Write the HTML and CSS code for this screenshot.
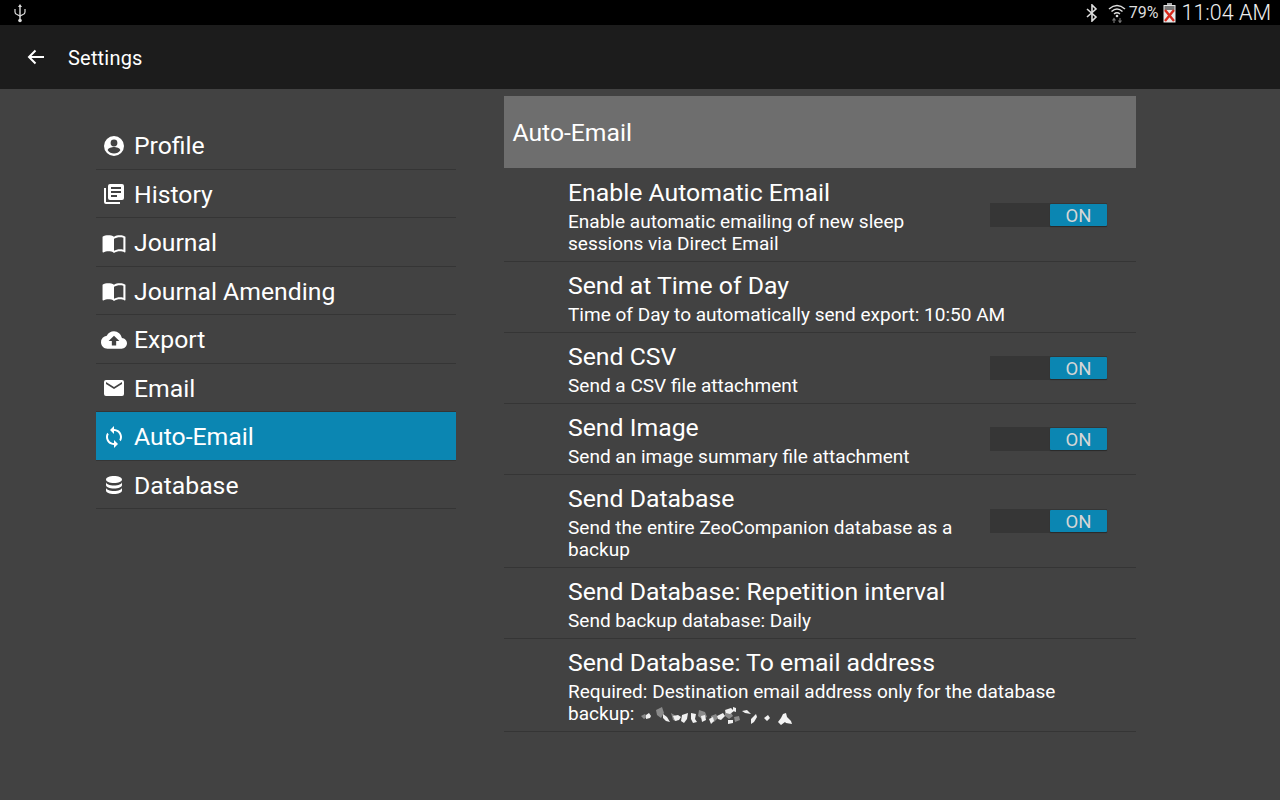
FILE: index.html
```html
<!DOCTYPE html>
<html lang="en">
<head>
    <meta charset="UTF-8">
    <title>Settings</title>
    <link rel="stylesheet" href="styles.css">
</head>
<body>
    <div class="status-bar">
        <svg class="usb-icon" width="14" height="20" viewBox="0 0 14 20">
            <path d="M7 1 L9 4 H7.7 V16 H6.3 V4 H5 Z" fill="#ddd"/>
            <circle cx="7" cy="17.5" r="1.8" fill="#ddd"/>
            <path d="M2 6 V9 Q2 11 4 11.5 L7 13 L10 11.5 Q12 11 12 9 V6" fill="none" stroke="#ddd" stroke-width="1.2"/>
        </svg>
        <div class="status-right">
            <svg width="12" height="18" viewBox="0 0 12 18">
                <path d="M1 5 L10 13 L6 17 V1 L10 5 L1 13" fill="none" stroke="#ddd" stroke-width="1.6"/>
            </svg>
            <svg class="wifi-icon" width="18" height="20" viewBox="0 0 18 20">
                <path d="M1 6 Q9 -1 17 6 M3.5 8.5 Q9 3.5 14.5 8.5 M6 11 Q9 8.5 12 11" fill="none" stroke="#ddd" stroke-width="1.5"/>
                <circle cx="9" cy="13" r="1.3" fill="#ddd"/>
                <path d="M6 20 V16 M4.5 17.5 L6 15.5 L7.5 17.5 M12 15 V19 M10.5 17.5 L12 19.5 L13.5 17.5" fill="none" stroke="#777" stroke-width="1.1"/>
            </svg>
            <span class="battery-text">79%</span>
            <svg class="battery-icon" width="13" height="20" viewBox="0 0 13 20">
                <rect x="4" y="0" width="5" height="2" fill="#aaa"/>
                <rect x="0.5" y="2" width="12" height="17.5" fill="#e8e8e8"/>
                <rect x="1.5" y="3" width="10" height="4" fill="#777"/>
                <path d="M2 7 L11 18 M11 7 L2 18" stroke="#d8291c" stroke-width="2.4"/>
            </svg>
            <span class="clock">11:04 AM</span>
        </div>
    </div>

    <header class="app-bar">
        <svg class="back-icon" width="18" height="16" viewBox="0 0 18 16">
            <path d="M17 8 H2 M8.5 1.5 L2 8 L8.5 14.5" fill="none" stroke="#fff" stroke-width="2"/>
        </svg>
        <span class="app-title">Settings</span>
    </header>

    <main class="content">
        <nav class="side-nav">
            <a class="nav-item">
                <svg class="nav-icon" viewBox="0 0 24 24"><path d="M12 2a10 10 0 1 0 0 20 10 10 0 0 0 0-20zm0 3.600a3.400 3.400 0 1 1 0 6.800 3.400 3.400 0 0 1 0-6.800zM12 19.600a7.700 7.700 0 0 1-6.300-3.300c.1-2.100 4.200-3.200 6.300-3.200s6.200 1.100 6.300 3.200a7.700 7.700 0 0 1-6.300 3.300z"/></svg>
                Profile
            </a>
            <a class="nav-item">
                <svg class="nav-icon" viewBox="0 0 24 24"><path d="M4 6H2v14a2 2 0 0 0 2 2h14v-2H4V6zm16-4H8a2 2 0 0 0-2 2v12a2 2 0 0 0 2 2h12a2 2 0 0 0 2-2V4a2 2 0 0 0-2-2zm-1 9H9V9h10v2zm-4 4H9v-2h6v2zm4-8H9V5h10v2z"/></svg>
                History
            </a>
            <a class="nav-item">
                <svg class="nav-icon book" viewBox="0 0 24 24"><path d="M21 5c-1.100-.35-2.300-.5-3.500-.5-1.950 0-4.050.4-5.500 1.500-1.450-1.100-3.550-1.500-5.500-1.500S2.450 4.900 1 6v14.650c0 .25.25.5.5.5.1 0 .15-.05.25-.05C3.100 20.450 5.050 20 6.500 20c1.950 0 4.050.4 5.500 1.500 1.350-.85 3.800-1.500 5.500-1.500 1.650 0 3.350.3 4.750 1.050.1.05.15.05.25.05.25 0 .5-.25.5-.5V6c-.6-.45-1.250-.75-2-1zm0 13.500c-1.100-.35-2.300-.5-3.500-.5-1.700 0-4.150.65-5.500 1.500V8c1.350-.85 3.800-1.500 5.500-1.500 1.200 0 2.400.15 3.500.5v11.500z"/></svg>
                Journal
            </a>
            <a class="nav-item">
                <svg class="nav-icon book" viewBox="0 0 24 24"><path d="M21 5c-1.100-.35-2.300-.5-3.500-.5-1.950 0-4.050.4-5.500 1.500-1.450-1.100-3.550-1.500-5.500-1.500S2.450 4.900 1 6v14.650c0 .25.25.5.5.5.1 0 .15-.05.25-.05C3.100 20.450 5.050 20 6.500 20c1.950 0 4.050.4 5.500 1.500 1.350-.85 3.800-1.500 5.500-1.500 1.650 0 3.350.3 4.750 1.050.1.05.15.05.25.05.25 0 .5-.25.5-.5V6c-.6-.45-1.250-.75-2-1zm0 13.500c-1.100-.35-2.300-.5-3.500-.5-1.700 0-4.150.65-5.500 1.500V8c1.350-.85 3.800-1.500 5.500-1.500 1.200 0 2.400.15 3.500.5v11.500z"/></svg>
                Journal Amending
            </a>
            <a class="nav-item">
                <svg class="nav-icon wide" viewBox="0 0 24 24"><path d="M19.350 10.040A7.490 7.490 0 0 0 12 4C9.110 4 6.600 5.640 5.350 8.040A5.994 5.994 0 0 0 0 14c0 3.310 2.690 6 6 6h13c2.760 0 5-2.240 5-5 0-2.640-2.050-4.780-4.650-4.960zM14 13v4h-4v-4H7l5-5 5 5h-3z"/></svg>
                Export
            </a>
            <a class="nav-item">
                <svg class="nav-icon" viewBox="0 0 24 24"><path d="M20 4H4a2 2 0 0 0-2 2v12a2 2 0 0 0 2 2h16a2 2 0 0 0 2-2V6a2 2 0 0 0-2-2zm0 4l-8 5-8-5V6l8 5 8-5v2z"/></svg>
                Email
            </a>
            <a class="nav-item active">
                <svg class="nav-icon" viewBox="0 0 24 24"><path d="M12 4V1L8 5l4 4V6c3.310 0 6 2.690 6 6 0 1.010-.25 1.970-.7 2.800l1.460 1.460A7.930 7.930 0 0 0 20 12c0-4.420-3.580-8-8-8zm0 14c-3.310 0-6-2.690-6-6 0-1.010.25-1.970.7-2.800L5.240 7.740A7.930 7.930 0 0 0 4 12c0 4.420 3.580 8 8 8v3l4-4-4-4v3z"/></svg>
                Auto-Email
            </a>
            <a class="nav-item">
                <svg class="nav-icon" viewBox="0 0 24 24"><path d="M12 3C7.600 3 4 4.500 4 6.500S7.600 10 12 10s8-1.500 8-3.500S16.400 3 12 3zM4 9v3c0 2 3.600 3.500 8 3.500s8-1.500 8-3.500V9c0 2-3.600 3.500-8 3.500S4 11 4 9zm0 5.500v3C4 19.500 7.600 21 12 21s8-1.500 8-3.500v-3c0 2-3.600 3.500-8 3.500s-8-1.500-8-3.500z"/></svg>
                Database
            </a>
        </nav>

        <section class="panel">
            <h2 class="panel-header">Auto-Email</h2>

            <div class="pref-row">
                <div class="pref-text">
                    <div class="pref-title">Enable Automatic Email</div>
                    <div class="pref-summary">Enable automatic emailing of new sleep sessions via Direct Email</div>
                </div>
                <div class="toggle"><span class="toggle-on">ON</span></div>
            </div>
            <div class="pref-row">
                <div class="pref-text">
                    <div class="pref-title">Send at Time of Day</div>
                    <div class="pref-summary wide-summary">Time of Day to automatically send export: 10:50 AM</div>
                </div>
            </div>
            <div class="pref-row">
                <div class="pref-text">
                    <div class="pref-title">Send CSV</div>
                    <div class="pref-summary">Send a CSV file attachment</div>
                </div>
                <div class="toggle"><span class="toggle-on">ON</span></div>
            </div>
            <div class="pref-row">
                <div class="pref-text">
                    <div class="pref-title">Send Image</div>
                    <div class="pref-summary">Send an image summary file attachment</div>
                </div>
                <div class="toggle"><span class="toggle-on">ON</span></div>
            </div>
            <div class="pref-row">
                <div class="pref-text">
                    <div class="pref-title">Send Database</div>
                    <div class="pref-summary">Send the entire ZeoCompanion database as a backup</div>
                </div>
                <div class="toggle"><span class="toggle-on">ON</span></div>
            </div>
            <div class="pref-row">
                <div class="pref-text">
                    <div class="pref-title">Send Database: Repetition interval</div>
                    <div class="pref-summary wide-summary">Send backup database: Daily</div>
                </div>
            </div>
            <div class="pref-row">
                <div class="pref-text">
                    <div class="pref-title">Send Database: To email address</div>
                    <div class="pref-summary wide-summary">Required: Destination email address only for the database<br>backup:
                        <svg class="redacted" width="158" height="18" viewBox="0 0 158 18">
                            <path d="M4 9l4-2 2 3-3 2zM19 3l6-3 2 6-3 5-4-3zM34 6l5 3 1 5-4-1zM62 3l6 2 2 5-5 2-4-3zM74 9l5-2 2 4-4 4-3-2zM88 4l5 0 3 5-4 3-4-3zM97 10l5-1 1 4-5 2z" fill="#8a8a8a"/>
                            <path d="M9 8l3-2 2 3-1 2-4 1zM26 7l4 3 3 5-4-1-3-3zM36 9l5-1 3 2-2 3-4 1zM45 8l6-2-1 6-3 4-3-2zM54 6l5 1-1 5 2 3-4 1-2-4zM64 9l4-1 1 5-4 2zM72 12l4-2 1 4-3 3zM80 9l6-3 2 3-4 4-3-1zM88 3l6-2 3 3-4 3-4-1zM96 0l3 1 0 4-3-1zM91 13l5 0 0 3-5 1zM105 4l5-1 4 4-6-1zM114 12l5-5 1 3-3 5-3 2zM127 11l4-3 2 3-3 3z" fill="#f0f0f0"/>
                            <path d="M146 7l3-1 1 4 4 4 1 3-6-1-1-1-4 3-3-3 3-4z" fill="#f4f4f4"/>
                        </svg>
                    </div>
                </div>
            </div>
        </section>
    </main>
</body>
</html>
```

FILE: styles.css
```css
* {
    box-sizing: border-box;
}

html, body {
    height: 100%;
}

body {
    margin: 0;
    background-color: #424242;
    color: #fff;
    font-family: Roboto, "Noto Sans", sans-serif;
    overflow: hidden;
}

.status-bar {
    height: 25px;
    background-color: #000;
    display: flex;
    justify-content: space-between;
    align-items: center;
    padding: 0 9px 0 13px;
    color: #ddd;
}

.status-right {
    display: flex;
    align-items: center;
    gap: 5px;
}

.wifi-icon {
    margin-left: 5px;
}

.battery-text {
    font-size: 16px;
    margin-left: -2px;
}

.battery-icon {
    margin-left: -1px;
}

.clock {
    font-size: 21.5px;
    font-weight: 300;
    color: #eee;
    margin-left: 1px;
}

.app-bar {
    height: 64px;
    background-color: #1c1c1c;
    display: flex;
    align-items: center;
    padding-left: 27px;
}

.back-icon {
    margin-right: 23px;
}

.app-title {
    font-size: 20px;
    letter-spacing: 0.2px;
    padding-top: 1px;
}

.content {
    display: grid;
    grid-template-columns: 360px 632px;
    column-gap: 48px;
    padding: 7px 0 0 96px;
}

.side-nav {
    padding-top: 25px;
}

.nav-item {
    display: flex;
    align-items: center;
    height: 48.5px;
    padding: 2px 0 0 5px;
    border-bottom: 1px solid #353535;
    font-size: 24.75px;
}

.nav-item.active {
    background-color: #0b86b2;
}

.nav-icon {
    width: 26px;
    height: 26px;
    fill: #fff;
    margin: 0 7px 0 0;
    padding: 1px;
    flex-shrink: 0;
}

.nav-icon.wide {
    padding: 0;
}

.nav-icon.book {
    padding: 0.5px;
}

.panel-header {
    margin: 0 0 1px;
    height: 72px;
    background-color: #6e6e6e;
    display: flex;
    align-items: center;
    padding: 1px 0 0 8.5px;
    font-size: 24.7px;
    font-weight: 400;
}

.pref-row {
    display: flex;
    justify-content: space-between;
    align-items: center;
    padding: 6px 29px 6px 64px;
    border-bottom: 1px solid #353535;
    min-height: 71px;
}

.pref-text {
    flex: 1;
}

.pref-title {
    font-size: 24.8px;
    line-height: 36px;
    white-space: nowrap;
}

.pref-summary {
    font-size: 19.05px;
    line-height: 22px;
    width: 400px;
}

.wide-summary {
    width: auto;
    white-space: nowrap;
}

.redacted {
    vertical-align: -5px;
    margin-left: -2px;
}

.toggle {
    width: 117px;
    height: 24px;
    background-color: #363636;
    display: flex;
    justify-content: flex-end;
    align-items: center;
    flex-shrink: 0;
}

.toggle-on {
    width: 57px;
    height: 22px;
    padding-top: 1px;
    background-color: #0b86b2;
    box-shadow: 0 1px 1px #2b2b2b;
    border-radius: 1px;
    color: #d6d6d6;
    font-size: 18.5px;
    display: flex;
    align-items: center;
    justify-content: center;
}
```
